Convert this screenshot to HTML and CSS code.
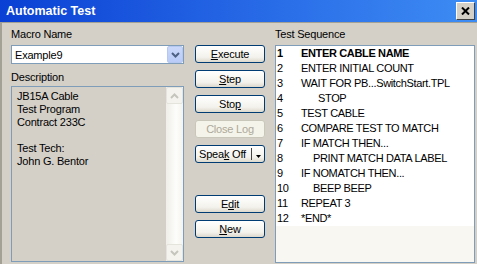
FILE: index.html
```html
<!DOCTYPE html>
<html lang="en">
<head>
    <meta charset="UTF-8">
    <title>Automatic Test</title>
    <link rel="stylesheet" href="styles.css">
</head>
<body>
    <div class="window">
        <div class="titlebar">
            <span class="title">Automatic Test</span>
            <span class="close">
                <svg width="9" height="8" viewBox="0 0 9 8"><path d="M1 0.5 L8 7.5 M8 0.5 L1 7.5" stroke="#000" stroke-width="2"/></svg>
            </span>
        </div>

        <div class="dialog">
            <!-- left column -->
            <div class="col-left">
                <div class="label">Macro Name</div>
                <div class="combo">
                    <span class="combo-value">Example9</span>
                    <span class="combo-btn">
                        <svg width="9" height="6" viewBox="0 0 9 6"><path d="M1 1 L4.5 4.5 L8 1" fill="none" stroke="#4d6185" stroke-width="2"/></svg>
                    </span>
                </div>
                <div class="label desc-label">Description</div>
                <div class="desc">
                    <div class="desc-text">JB15A Cable<br>Test Program<br>Contract 233C<br><br>Test Tech:<br>John G. Bentor</div>
                    <div class="scrollbar">
                        <span class="sb-btn">
                            <svg width="9" height="6" viewBox="0 0 9 6"><path d="M1 5 L4.5 1.5 L8 5" fill="none" stroke="#c6c5bd" stroke-width="2"/></svg>
                        </span>
                        <span class="sb-track"></span>
                        <span class="sb-btn">
                            <svg width="9" height="6" viewBox="0 0 9 6"><path d="M1 1 L4.5 4.5 L8 1" fill="none" stroke="#c6c5bd" stroke-width="2"/></svg>
                        </span>
                    </div>
                </div>
            </div>

            <!-- buttons -->
            <div class="col-buttons">
                <button class="btn"><u>E</u>xecute</button>
                <button class="btn"><u>S</u>tep</button>
                <button class="btn">Sto<u>p</u></button>
                <button class="btn" disabled>Close Log</button>
                <button class="btn split">
                    <span class="split-text">Spea<u>k</u> Off</span>
                    <span class="split-sep"></span>
                    <svg class="split-arrow" width="5" height="3" viewBox="0 0 5 3"><path d="M0 0 H5 L2.5 3 Z" fill="#000"/></svg>
                </button>
                <div class="spacer"></div>
                <button class="btn">E<u>d</u>it</button>
                <button class="btn"><u>N</u>ew</button>
            </div>

            <!-- right column -->
            <div class="col-right">
                <div class="label">Test Sequence</div>
                <div class="list">
                    <div class="rows">
                        <div class="row bold"><span class="num">1</span><span class="cmd">ENTER CABLE NAME</span></div>
                        <div class="row"><span class="num">2</span><span class="cmd">ENTER INITIAL COUNT</span></div>
                        <div class="row"><span class="num">3</span><span class="cmd">WAIT FOR PB...SwitchStart.TPL</span></div>
                        <div class="row"><span class="num">4</span><span class="cmd ind-stop">STOP</span></div>
                        <div class="row"><span class="num">5</span><span class="cmd">TEST CABLE</span></div>
                        <div class="row"><span class="num">6</span><span class="cmd">COMPARE TEST TO MATCH</span></div>
                        <div class="row"><span class="num">7</span><span class="cmd">IF MATCH THEN...</span></div>
                        <div class="row"><span class="num">8</span><span class="cmd ind">PRINT MATCH DATA LABEL</span></div>
                        <div class="row"><span class="num">9</span><span class="cmd">IF NOMATCH THEN...</span></div>
                        <div class="row"><span class="num">10</span><span class="cmd ind">BEEP BEEP</span></div>
                        <div class="row"><span class="num">11</span><span class="cmd">REPEAT 3</span></div>
                        <div class="row"><span class="num">12</span><span class="cmd">*END*</span></div>
                    </div>
                </div>
            </div>
        </div>
    </div>
</body>
</html>
```

FILE: styles.css
```css
/* window frame */
body {
    margin: 0;
    font-family: "Liberation Sans", Arial, sans-serif;
    font-size: 11px;
    letter-spacing: -0.2px;
    color: #000;
}

.window {
    width: 477px;
    height: 264px;
    background: #d4d0c8;
    overflow: hidden;
    display: flex;
    flex-direction: column;
}

.titlebar {
    flex: none;
    height: 22px;
    box-sizing: border-box;
    padding: 0 2px 0 6px;
    background: linear-gradient(to right, #0a40d4, #2a6ee8 60%, #3d8cf4);
    display: flex;
    align-items: center;
    justify-content: space-between;
}

.title {
    color: #fff;
    font-weight: bold;
    font-size: 12.5px;
    letter-spacing: 0;
}

.close {
    width: 19px;
    height: 18px;
    box-sizing: border-box;
    background: #d4d0c8;
    border: 1px solid;
    border-color: #fff #404040 #404040 #fff;
    display: flex;
    align-items: center;
    justify-content: center;
}

.dialog {
    flex: 1;
    display: flex;
    border-top: 1px solid #a3a195;
    border-left: 2px solid #a3a195;
    padding: 5px 0 0 9px;
}

.label {
    height: 13px;
    line-height: 13px;
    margin-bottom: 4px;
    white-space: nowrap;
}

/* left column */
.col-left {
    width: 173px;
    flex: none;
}

.combo {
    height: 19px;
    box-sizing: border-box;
    border: 1px solid #7f9db9;
    background: #fff;
    display: flex;
    align-items: center;
}

.combo-value {
    flex: 1;
    padding-left: 3px;
}

.combo-btn {
    width: 16px;
    height: 17px;
    box-sizing: border-box;
    border: 1px solid #b6c8ef;
    border-radius: 2px;
    background: linear-gradient(#cad8fa, #b9cbf7);
    display: flex;
    align-items: center;
    justify-content: center;
}

.desc-label {
    margin-top: 7px;
    margin-bottom: 2px;
}

.desc {
    height: 176px;
    box-sizing: border-box;
    border: 1px solid #7f9db9;
    display: flex;
}

.desc-text {
    flex: 1;
    padding: 3px 0 0 5px;
    line-height: 13px;
}

.scrollbar {
    width: 17px;
    display: flex;
    flex-direction: column;
    background: linear-gradient(to right, #efeee7, #fdfdfb 60%, #f4f3ee);
}

.sb-btn {
    height: 17px;
    box-sizing: border-box;
    border: 1px solid #e4e3dc;
    border-radius: 2px;
    background: #f4f3ee;
    display: flex;
    align-items: center;
    justify-content: center;
}

.sb-track {
    flex: 1;
}

/* buttons column */
.col-buttons {
    width: 70px;
    flex: none;
    margin-left: 11px;
    padding-top: 17px;
    display: flex;
    flex-direction: column;
}

.btn {
    height: 18px;
    margin-bottom: 7px;
    padding: 0;
    box-sizing: border-box;
    border: 1px solid #003c74;
    border-radius: 3px;
    background: linear-gradient(#ffffff, #f3f2ec 70%, #dcd8cd);
    font-family: "Liberation Sans", Arial, sans-serif;
    font-size: 11px;
    letter-spacing: -0.2px;
    color: #000;
}

.btn:disabled {
    border-color: #c9c7ba;
    background: #f5f4ea;
    color: #aca899;
}

.split {
    display: flex;
    align-items: center;
    padding-left: 3px;
}

.split-text {
    white-space: nowrap;
}

.split-sep {
    width: 1px;
    height: 12px;
    background: #444;
    margin-left: 5px;
}

.split-arrow {
    margin: 5px 0 0 4px;
}

.spacer {
    height: 25px;
}

/* right column */
.col-right {
    width: 200px;
    flex: none;
    margin-left: 10px;
}

.list {
    height: 218px;
    box-sizing: border-box;
    border: 1px solid #7f9db9;
    background: #f8f7f2;
}

.rows {
    background: #fff;
    letter-spacing: -0.35px;
}

.row {
    height: 15px;
    line-height: 15px;
    display: flex;
    white-space: nowrap;
}

.row.bold {
    font-weight: bold;
}

.num {
    width: 24px;
    flex: none;
    padding-left: 1px;
}

.ind {
    padding-left: 12px;
}

.ind-stop {
    padding-left: 17px;
}
```
